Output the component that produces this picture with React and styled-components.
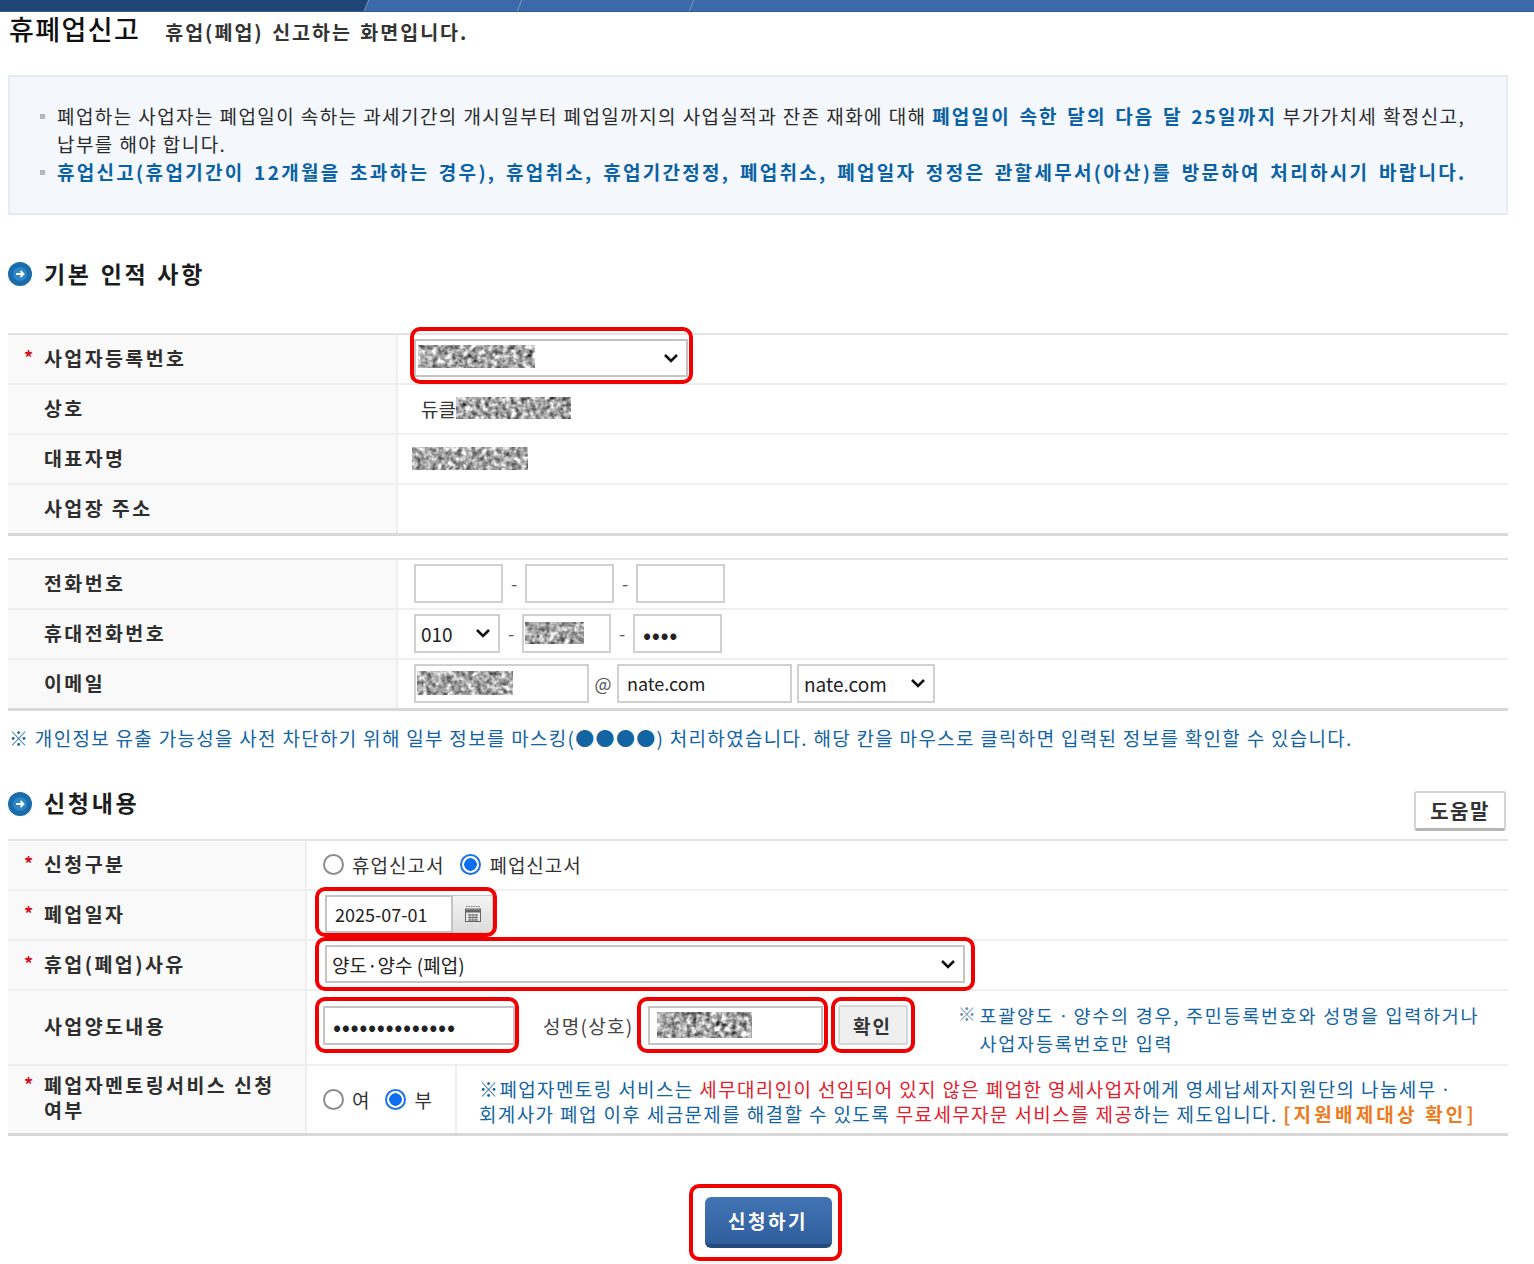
import React from 'react';
import styled, { createGlobalStyle } from 'styled-components';

const GlobalStyle = createGlobalStyle`
  html, body {
    margin: 0;
    padding: 0;
    background: #fff;
  }
  body {
    font-family: "Noto Sans CJK KR", "Noto Sans", sans-serif;
    color: #222;
  }
`;

const chevron = `url("data:image/svg+xml,%3Csvg xmlns='http://www.w3.org/2000/svg' width='16' height='10' viewBox='0 0 16 10'%3E%3Cpath d='M2 2l6 6 6-6' fill='none' stroke='%23111' stroke-width='2.6'/%3E%3C/svg%3E")`;

const TopBar = styled.div`
  display: flex;
  height: 12px;
  background: #3a6ba8;
  border-bottom: 1px solid #2f5b92;
  box-sizing: border-box;
  overflow: hidden;
`;

const TopTab = styled.div`
  width: ${({ width }) => width}px;
  margin-left: ${({ first }) => (first ? '-10px' : '0')};
  background: ${({ first }) => (first ? '#1f4676' : 'transparent')};
  border-right: 1px solid #7d9cc4;
  transform: skewX(-22deg);
`;

const Page = styled.div`
  padding: 0 26px 0 8px;
`;

const TitleRow = styled.div`
  display: flex;
  align-items: baseline;
  height: 63px;
`;

const Title = styled.h1`
  margin: 0 25px 0 1px;
  font-size: 27px;
  line-height: 34px;
  font-weight: 500;
  color: #111;
  letter-spacing: 1.4px;
`;

const SubTitle = styled.span`
  font-size: 19.5px;
  font-weight: 600;
  letter-spacing: 2px;
  word-spacing: 2px;
  color: #333;
`;

const Notice = styled.div`
  box-sizing: border-box;
  height: 140px;
  padding: 25px 8px 0 30px;
  background: #f4f7fc;
  border: 2px solid #e6eaf1;
  font-size: 19px;
  line-height: 28px;
  letter-spacing: 1.42px;
  color: #2b2b2b;
`;

const NoticeLine = styled.div`
  position: relative;
  padding-left: 17px;
  white-space: pre-line;
  color: ${({ blue }) => (blue ? '#0a62a5' : 'inherit')};
  font-weight: ${({ blue }) => (blue ? 600 : 400)};
  letter-spacing: ${({ blue }) => (blue ? '2.3px' : 'inherit')};
  word-spacing: ${({ blue }) => (blue ? '3px' : '0')};

  &::before {
    content: '';
    position: absolute;
    left: 0;
    top: 12px;
    width: 5px;
    height: 5px;
    background: #b4b8bd;
  }
`;

const Emph = styled.b`
  color: #0a62a5;
  font-weight: 600;
  letter-spacing: 2.2px;
  word-spacing: 2px;
`;

const SectionHead = styled.div`
  display: flex;
  align-items: center;
  justify-content: space-between;
  height: ${({ height }) => height}px;
  box-sizing: border-box;
`;

const HeadLeft = styled.div`
  display: flex;
  align-items: center;
  gap: 12px;
`;

const HeadText = styled.h2`
  margin: 0 0 3px;
  font-size: 23px;
  font-weight: 600;
  letter-spacing: 2.7px;
  word-spacing: 1px;
  color: #1c1c1c;
`;

const HelpButton = styled.button`
  width: 92px;
  height: 40px;
  margin: 15px 2px 0 0;
  background: #fff;
  border: 2px solid #d4d4d4;
  border-bottom: 3px solid #b5b5b5;
  border-radius: 3px;
  font: 600 20px "Noto Sans CJK KR", sans-serif;
  letter-spacing: 1.5px;
  color: #333;
`;

const Table = styled.div`
  border-top: 2px solid #e4e4e4;
  border-bottom: 3px solid #d8d8d8;
  margin-bottom: ${({ gap }) => gap || 0}px;
`;

const Row = styled.div`
  display: grid;
  grid-template-columns: ${({ labelWidth }) => labelWidth}px 1fr;
  height: ${({ height }) => height || 48}px;
  & + & {
    border-top: 2px solid #efefef;
  }
`;

const Label = styled.div`
  display: flex;
  align-items: ${({ multi }) => (multi ? 'flex-start' : 'center')};
  padding: ${({ multi }) => (multi ? '6px 0 0 16px' : '0 0 4px 16px')};
  background: #f9f9f9;
  border-right: 2px solid #eeeeee;
  font-size: 19.5px;
  line-height: 25px;
  font-weight: 600;
  letter-spacing: 2.4px;
  color: #2e2e2e;
`;

const Star = styled.span`
  flex: none;
  width: 20px;
  color: ${({ empty }) => (empty ? 'transparent' : '#d3111c')};
  font-size: 18px;
  font-weight: 700;
  letter-spacing: 0;
`;

const Cell = styled.div`
  display: flex;
  align-items: center;
  min-width: 0;
  padding-left: ${({ pad }) => pad ?? 16}px;
  padding-bottom: ${({ lift }) => lift ?? 2}px;
  font-size: 19px;
  color: #333;
`;

const Field = styled.div`
  position: relative;
  flex: none;
  display: flex;
`;

const Highlight = styled.span`
  position: absolute;
  top: ${({ t }) => t}px;
  right: ${({ r }) => r}px;
  bottom: ${({ b }) => b}px;
  left: ${({ l }) => l}px;
  border: 4px solid #f00000;
  border-radius: 10px;
  pointer-events: none;
  z-index: 2;
`;

const Select = styled.select`
  appearance: none;
  box-sizing: border-box;
  width: ${({ width }) => width}px;
  height: ${({ height }) => height || 39}px;
  padding: 0 26px 0 5px;
  background: #fff ${chevron} no-repeat right 7px center;
  border: 2px solid ${({ strong }) => (strong ? '#c4c4c4' : '#d0d0d0')};
  border-radius: 0;
  font: 400 19px "Noto Sans CJK KR", "Liberation Sans", sans-serif;
  color: #222;
`;

const Input = styled.input`
  box-sizing: border-box;
  width: ${({ width }) => width}px;
  height: ${({ height }) => height || 39}px;
  padding: 0 8px;
  background: #fff;
  border: 2px solid ${({ strong }) => (strong ? '#c4c4c4' : '#d0d0d0')};
  font: 400 ${({ type }) => (type === 'password' ? '24px' : '18px')} "Noto Sans CJK KR", "Liberation Sans", sans-serif;
  letter-spacing: ${({ type }) => (type === 'password' ? '0.6px' : '0')};
  color: #222;
  outline: none;
`;

const Dash = styled.span`
  width: ${({ width }) => width || 22}px;
  text-align: center;
  color: #555;
  font-size: 18px;
`;

const CalendarButton = styled.div`
  display: flex;
  align-items: center;
  justify-content: center;
  box-sizing: border-box;
  width: 40px;
  height: 38px;
  background: linear-gradient(#f4f4f4, #dcdcdc);
  border: 1px solid #c8c8c8;
  border-left: 0;
`;

const RadioGroup = styled.label`
  display: flex;
  align-items: center;
  gap: 8px;
  margin-right: ${({ gap }) => gap}px;
  font-size: 19px;
  letter-spacing: 1px;
  color: #333;
`;

const Radio = styled.input.attrs({ type: 'radio', readOnly: true })`
  appearance: none;
  box-sizing: border-box;
  width: 21px;
  height: 21px;
  margin: 0;
  border-radius: 50%;
  background: #fff;
  border: 2px solid #8c8c8c;

  &:checked {
    border: 2px solid #1a73e8;
    background: radial-gradient(circle, #0b6ff0 0 6px, #fff 6.5px);
  }
`;

const CaptionText = styled.span`
  flex: none;
  margin: 0 ${({ right }) => right}px 0 ${({ left }) => left}px;
  font-size: 19px;
  letter-spacing: 1.3px;
  color: #444;
`;

const ConfirmButton = styled.button`
  width: 70px;
  height: 40px;
  margin-left: 15px;
  background: #efefef;
  border: 2px solid #d6d6d6;
  border-radius: 2px;
  font: 700 19px "Noto Sans CJK KR", sans-serif;
  letter-spacing: 2px;
  color: #333;
`;

const Note = styled.div`
  position: relative;
  margin: 8px 0 0 50px;
  padding-left: 22px;
  font-size: 18.5px;
  line-height: 28px;
  letter-spacing: 1.75px;
  color: #1264a3;
  white-space: nowrap;
`;

const NoteMark = styled.span`
  position: absolute;
  left: 0;
  top: -2px;
  color: #6a8fae;
`;

const MaskNote = styled.div`
  height: 57px;
  padding: 12px 0 0 1px;
  box-sizing: border-box;
  font-size: 19px;
  line-height: 30px;
  letter-spacing: 1.3px;
  color: #1264a3;
  white-space: nowrap;
`;

const SplitCell = styled.div`
  display: grid;
  grid-template-columns: 150px 1fr;
`;

const RadioCell = styled.div`
  display: flex;
  align-items: center;
  padding-left: 16px;
  border-right: 2px solid #eeeeee;
`;

const MentorText = styled.div`
  padding: 10px 0 0 22px;
  font-size: 19px;
  line-height: 25px;
  letter-spacing: 1.38px;
  color: #1264a3;
  white-space: nowrap;
`;

const Red = styled.span`
  color: #e2202c;
`;

const Orange = styled.span`
  color: #ee7a1c;
  font-weight: 700;
  letter-spacing: 3.2px;
`;

const Footer = styled.div`
  display: flex;
  justify-content: center;
  padding: 61px 0 16px 20px;
`;

const ApplyButton = styled.button`
  width: 127px;
  height: 51px;
  background: linear-gradient(#4274b4, #305e9c);
  border: 0;
  border-bottom: 4px solid #234a7c;
  border-radius: 6px;
  font: 700 19px "Noto Sans CJK KR", sans-serif;
  letter-spacing: 2.5px;
  color: #fff;
`;

const MosaicSvg = styled.svg`
  display: block;
  flex: none;
`;

const MosaicOver = styled.div`
  position: absolute;
  left: ${({ left }) => left}px;
  top: ${({ top }) => top}px;
`;

const Plain = styled.span`
  font-size: 19px;
  color: #333;
`;

const Mosaic = ({ width, height, seed = 3 }) => (
  <MosaicSvg width={width} height={height}>
    <filter
      id={`mosaic-${seed}`}
      x="0"
      y="0"
      width="100%"
      height="100%"
      colorInterpolationFilters="sRGB"
    >
      <feTurbulence type="fractalNoise" baseFrequency="0.2" numOctaves="2" seed={seed} />
      <feColorMatrix
        type="matrix"
        values="0.9 0.9 0 0 -0.25  0.9 0.9 0 0 -0.25  0.9 0.9 0 0 -0.25  0 0 0 0 1"
      />
    </filter>
    <rect width={width} height={height} filter={`url(#mosaic-${seed})`} />
  </MosaicSvg>
);

const ArrowBullet = () => (
  <svg width="24" height="24" viewBox="0 0 24 24">
    <circle cx="12" cy="12" r="12" fill="#1a6cab" />
    <circle cx="12" cy="12" r="7" fill="#2f86c4" />
    <path d="M8 12h7M12.5 9l3 3-3 3" fill="none" stroke="#fff" strokeWidth="1.8" />
  </svg>
);

const CalendarIcon = () => (
  <svg width="18" height="18" viewBox="0 0 18 18">
    <path d="M2 1.5h14" stroke="#777" strokeWidth="1" strokeDasharray="1.5 1" />
    <rect x="1.5" y="4" width="15" height="12.5" fill="#e8e8e8" stroke="#666" />
    <rect x="2" y="4.5" width="14" height="3" fill="#666" />
    <path d="M4 10h10M4 12.5h10M4 15h10M6 9v7M9 9v7M12 9v7" stroke="#666" strokeWidth="0.9" />
  </svg>
);

const noop = () => {};

const App = () => (
  <>
    <GlobalStyle />
    <TopBar>
      <TopTab first width={376} />
      <TopTab width={152} />
      <TopTab width={171} />
    </TopBar>
    <Page>
      <TitleRow>
        <Title>휴폐업신고</Title>
        <SubTitle>휴업(폐업) 신고하는 화면입니다.</SubTitle>
      </TitleRow>

      <Notice>
        <NoticeLine>
          폐업하는 사업자는 폐업일이 속하는 과세기간의 개시일부터 폐업일까지의 사업실적과 잔존 재화에 대해{' '}
          <Emph>폐업일이 속한 달의 다음 달 25일까지</Emph> 부가가치세 확정신고,{'\n'}납부를 해야 합니다.
        </NoticeLine>
        <NoticeLine blue>
          휴업신고(휴업기간이 12개월을 초과하는 경우), 휴업취소, 휴업기간정정, 폐업취소, 폐업일자 정정은 관할세무서(아산)를 방문하여 처리하시기 바랍니다.
        </NoticeLine>
      </Notice>

      <SectionHead height={118}>
        <HeadLeft>
          <ArrowBullet />
          <HeadText>기본 인적 사항</HeadText>
        </HeadLeft>
      </SectionHead>

      <Table gap={22}>
        <Row labelWidth={390}>
          <Label><Star>*</Star>사업자등록번호</Label>
          <Cell>
            <Field>
              <Highlight t={-12} r={-5} b={-7} l={-4} />
              <Select width={274} height={38} strong><option>&nbsp;</option></Select>
              <MosaicOver left={4} top={6}><Mosaic width={117} height={23} seed={3} /></MosaicOver>
            </Field>
          </Cell>
        </Row>
        <Row labelWidth={390}>
          <Label><Star empty>*</Star>상호</Label>
          <Cell pad={23}>
            <Plain>듀클</Plain>
            <Mosaic width={115} height={22} seed={5} />
          </Cell>
        </Row>
        <Row labelWidth={390}>
          <Label><Star empty>*</Star>대표자명</Label>
          <Cell pad={14}><Mosaic width={116} height={23} seed={7} /></Cell>
        </Row>
        <Row labelWidth={390}>
          <Label><Star empty>*</Star>사업장 주소</Label>
          <Cell />
        </Row>
      </Table>

      <Table>
        <Row labelWidth={390}>
          <Label><Star empty>*</Star>전화번호</Label>
          <Cell>
            <Input width={89} />
            <Dash>-</Dash>
            <Input width={89} />
            <Dash>-</Dash>
            <Input width={89} />
          </Cell>
        </Row>
        <Row labelWidth={390}>
          <Label><Star empty>*</Star>휴대전화번호</Label>
          <Cell>
            <Select width={86}><option>010</option></Select>
            <Dash>-</Dash>
            <Field>
              <Input width={89} />
              <MosaicOver left={3} top={8}><Mosaic width={59} height={22} seed={9} /></MosaicOver>
            </Field>
            <Dash>-</Dash>
            <Input width={89} type="password" value="1234" onChange={noop} />
          </Cell>
        </Row>
        <Row labelWidth={390}>
          <Label><Star empty>*</Star>이메일</Label>
          <Cell>
            <Field>
              <Input width={175} />
              <MosaicOver left={3} top={7}><Mosaic width={96} height={24} seed={11} /></MosaicOver>
            </Field>
            <Dash width={28}>@</Dash>
            <Input width={175} value="nate.com" onChange={noop} />
            <Dash width={5} />
            <Select width={138}><option>nate.com</option></Select>
          </Cell>
        </Row>
      </Table>

      <MaskNote>
        ※ 개인정보 유출 가능성을 사전 차단하기 위해 일부 정보를 마스킹(●●●●) 처리하였습니다. 해당 칸을 마우스로 클릭하면 입력된 정보를 확인할 수 있습니다.
      </MaskNote>

      <SectionHead height={71}>
        <HeadLeft>
          <ArrowBullet />
          <HeadText>신청내용</HeadText>
        </HeadLeft>
        <HelpButton>도움말</HelpButton>
      </SectionHead>

      <Table>
        <Row labelWidth={299}>
          <Label><Star>*</Star>신청구분</Label>
          <Cell>
            <RadioGroup gap={16}><Radio name="kind" />휴업신고서</RadioGroup>
            <RadioGroup gap={0}><Radio name="kind" defaultChecked />폐업신고서</RadioGroup>
          </Cell>
        </Row>
        <Row labelWidth={299}>
          <Label><Star>*</Star>폐업일자</Label>
          <Cell pad={18}>
            <Field>
              <Highlight t={-8} r={-4} b={-4} l={-10} />
              <Input width={128} height={38} strong value="2025-07-01" onChange={noop} />
              <CalendarButton><CalendarIcon /></CalendarButton>
            </Field>
          </Cell>
        </Row>
        <Row labelWidth={299}>
          <Label><Star>*</Star>휴업(폐업)사유</Label>
          <Cell pad={18}>
            <Field>
              <Highlight t={-8} r={-10} b={-8} l={-10} />
              <Select width={640} height={38} strong><option>양도·양수 (폐업)</option></Select>
            </Field>
          </Cell>
        </Row>
        <Row labelWidth={299} height={73}>
          <Label><Star empty>*</Star>사업양도내용</Label>
          <Cell lift={5}>
            <Field>
              <Highlight t={-9} r={-4} b={-8} l={-8} />
              <Input width={192} strong type="password" value="12345678901234" onChange={noop} />
            </Field>
            <CaptionText left={28} right={14}>성명(상호)</CaptionText>
            <Field>
              <Highlight t={-9} r={-5} b={-8} l={-11} />
              <Input width={175} strong />
              <MosaicOver left={9} top={6}><Mosaic width={95} height={26} seed={13} /></MosaicOver>
            </Field>
            <Field>
              <Highlight t={-8} r={-7} b={-8} l={8} />
              <ConfirmButton>확인</ConfirmButton>
            </Field>
            <Note>
              <NoteMark>※</NoteMark>
              포괄양도ㆍ양수의 경우, 주민등록번호와 성명을 입력하거나<br />사업자등록번호만 입력
            </Note>
          </Cell>
        </Row>
        <Row labelWidth={299} height={67}>
          <Label multi><Star>*</Star><span>폐업자멘토링서비스 신청<br />여부</span></Label>
          <SplitCell>
            <RadioCell>
              <RadioGroup gap={15}><Radio name="mentor" />여</RadioGroup>
              <RadioGroup gap={0}><Radio name="mentor" defaultChecked />부</RadioGroup>
            </RadioCell>
            <MentorText>
              ※폐업자멘토링 서비스는 <Red>세무대리인이 선임되어 있지 않은 폐업한 영세사업자</Red>에게 영세납세자지원단의 나눔세무ㆍ<br />
              회계사가 폐업 이후 세금문제를 해결할 수 있도록 <Red>무료세무자문 서비스를 제공</Red>하는 제도입니다. <Orange>[지원배제대상 확인]</Orange>
            </MentorText>
          </SplitCell>
        </Row>
      </Table>

      <Footer>
        <Field>
          <Highlight t={-13} r={-10} b={-13} l={-16} />
          <ApplyButton>신청하기</ApplyButton>
        </Field>
      </Footer>
    </Page>
  </>
);

export default App;
